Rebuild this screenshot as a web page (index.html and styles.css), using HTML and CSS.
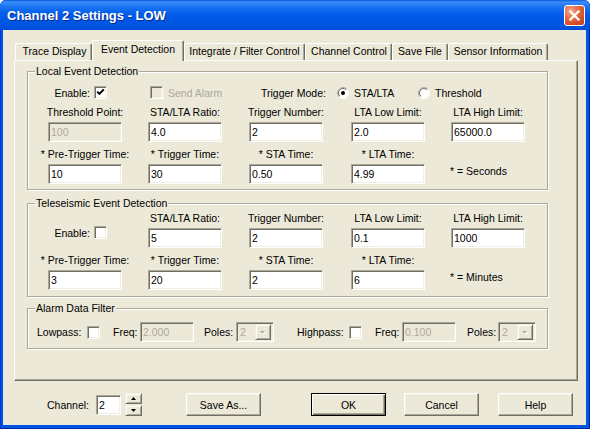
FILE: index.html
```html
<!DOCTYPE html>
<html>
<head>
<meta charset="utf-8">
<title>Channel 2 Settings - LOW</title>
<link rel="stylesheet" href="styles.css">
</head>
<body>
<div class="window">
  <div class="titlebar">
    <span class="title">Channel 2 Settings - LOW</span>
    <span class="close"><svg width="11" height="11" viewBox="0 0 11 11"><path d="M1.5 1.5 L9.5 9.5 M9.5 1.5 L1.5 9.5" stroke="#fff" stroke-width="2.3" stroke-linecap="square"/></svg></span>
  </div>
  <div class="client">
    <div class="tabs">
      <div class="tab t-trace">Trace Display</div>
      <div class="tab active t-event">Event Detection</div>
      <div class="tab t-integ">Integrate / Filter Control</div>
      <div class="tab t-chan">Channel Control</div>
      <div class="tab t-save">Save File</div>
      <div class="tab t-sensor">Sensor Information</div>
    </div>
    <div class="panel">
      <div class="group g-local">
        <span class="group-title">Local Event Detection</span>
        <div class="row1">
          <div class="enable"><span>Enable:</span><span class="check"><svg width="9" height="9" viewBox="0 0 9 9"><path d="M1.2 3.6 L3.4 5.9 L7.8 1.4" fill="none" stroke="#000" stroke-width="2"/></svg></span></div>
          <div class="sendalarm"><span class="check off"></span><span class="dis">Send Alarm</span></div>
          <span class="tm-label">Trigger Mode:</span>
          <div class="opt opt-sta"><span class="radio"><svg width="12" height="12" viewBox="0 0 12 12"><circle cx="6" cy="6" r="5.5" fill="#fff"/><path d="M2.1 9.9 A5.5 5.5 0 0 1 9.9 2.1" fill="none" stroke="#ACA899"/><path d="M2.8 9.2 A4.5 4.5 0 0 1 9.2 2.8" fill="none" stroke="#716F64"/><path d="M9.9 2.1 A5.5 5.5 0 0 1 2.1 9.9" fill="none" stroke="#fff"/><circle cx="6" cy="6" r="2" fill="#000"/></svg></span><span>STA/LTA</span></div>
          <div class="opt"><span class="radio"><svg width="12" height="12" viewBox="0 0 12 12"><circle cx="6" cy="6" r="5.5" fill="#fff"/><path d="M2.1 9.9 A5.5 5.5 0 0 1 9.9 2.1" fill="none" stroke="#ACA899"/><path d="M2.8 9.2 A4.5 4.5 0 0 1 9.2 2.8" fill="none" stroke="#716F64"/><path d="M9.9 2.1 A5.5 5.5 0 0 1 2.1 9.9" fill="none" stroke="#fff"/></svg></span><span>Threshold</span></div>
        </div>
        <div class="fields">
          <div class="field"><span class="lbl">Threshold Point:</span><input class="edit" value="100" disabled></div>
          <div class="field"><span class="lbl">STA/LTA Ratio:</span><input class="edit" value="4.0"></div>
          <div class="field"><span class="lbl">Trigger Number:</span><input class="edit" value="2"></div>
          <div class="field"><span class="lbl">LTA Low Limit:</span><input class="edit" value="2.0"></div>
          <div class="field"><span class="lbl">LTA High Limit:</span><input class="edit" value="65000.0"></div>
          <div class="field"><span class="lbl">* Pre-Trigger Time:</span><input class="edit" value="10"></div>
          <div class="field"><span class="lbl">* Trigger Time:</span><input class="edit" value="30"></div>
          <div class="field"><span class="lbl">* STA Time:</span><input class="edit" value="0.50"></div>
          <div class="field"><span class="lbl">* LTA Time:</span><input class="edit" value="4.99"></div>
          <div class="note">* = Seconds</div>
        </div>
      </div>

      <div class="group g-tele">
        <span class="group-title">Teleseismic Event Detection</span>
        <div class="fields">
          <div class="field enable-cell"><div class="enable"><span>Enable:</span><span class="check"></span></div></div>
          <div class="field"><span class="lbl">STA/LTA Ratio:</span><input class="edit" value="5"></div>
          <div class="field"><span class="lbl">Trigger Number:</span><input class="edit" value="2"></div>
          <div class="field"><span class="lbl">LTA Low Limit:</span><input class="edit" value="0.1"></div>
          <div class="field"><span class="lbl">LTA High Limit:</span><input class="edit" value="1000"></div>
          <div class="field"><span class="lbl">* Pre-Trigger Time:</span><input class="edit" value="3"></div>
          <div class="field"><span class="lbl">* Trigger Time:</span><input class="edit" value="20"></div>
          <div class="field"><span class="lbl">* STA Time:</span><input class="edit" value="2"></div>
          <div class="field"><span class="lbl">* LTA Time:</span><input class="edit" value="6"></div>
          <div class="note">* = Minutes</div>
        </div>
      </div>

      <div class="group g-alarm">
        <span class="group-title">Alarm Data Filter</span>
        <div class="row3">
          <span class="w-low">Lowpass:</span>
          <span class="check"></span>
          <span class="w-freq f1">Freq:</span>
          <input class="edit small" value="2.000" disabled>
          <span class="w-poles p1">Poles:</span>
          <div class="combo"><span class="val">2</span><span class="drop"><svg width="14" height="14" viewBox="0 0 14 14"><path d="M5 7 L10 7 L7.5 9.5 Z" fill="#fff"/><path d="M4 6 L9 6 L6.5 8.5 Z" fill="#ACA899"/></svg></span></div>
          <span class="w-high">Highpass:</span>
          <span class="check"></span>
          <span class="w-freq f2">Freq:</span>
          <input class="edit small" value="0.100" disabled>
          <span class="w-poles p2">Poles:</span>
          <div class="combo"><span class="val">2</span><span class="drop"><svg width="14" height="14" viewBox="0 0 14 14"><path d="M5 7 L10 7 L7.5 9.5 Z" fill="#fff"/><path d="M4 6 L9 6 L6.5 8.5 Z" fill="#ACA899"/></svg></span></div>
        </div>
      </div>
    </div>

    <div class="footer">
      <span class="ch-label">Channel:</span>
      <input class="edit ch" value="2">
      <div class="spin">
        <span class="spin-btn"><svg width="5" height="3" viewBox="0 0 5 3"><path d="M2.5 0 L5 3 L0 3 Z" fill="#000"/></svg></span>
        <span class="spin-btn"><svg width="5" height="3" viewBox="0 0 5 3"><path d="M0 0 L5 0 L2.5 3 Z" fill="#000"/></svg></span>
      </div>
      <button class="btn b-save">Save As...</button>
      <button class="btn default b-ok">OK</button>
      <button class="btn b-cancel">Cancel</button>
      <button class="btn b-help">Help</button>
    </div>
  </div>
</div>
</body>
</html>
```

FILE: styles.css
```css
body {
  margin: 0;
  background: #ffffff;
  font-family: "Liberation Sans", Arial, sans-serif;
  font-size: 10.5px;
  color: #000;
}

.window {
  width: 590px;
  height: 429px;
  display: flex;
  flex-direction: column;
  background: #0055E5;
  border-radius: 6px 6px 0 0;
  overflow: hidden;
  box-shadow: inset -1px -1px 0 #00269E, inset 1px 0 0 #0838D0;
}

.titlebar {
  height: 30px;
  flex: none;
  display: flex;
  align-items: center;
  padding: 0 5px 0 7px;
  background: linear-gradient(#0A5BE0 0px, #3E8EF6 2px, #2C82F6 4px, #1670EF 8px, #0560EB 13px, #0058E6 18px, #0054E1 25px, #004CD8 30px);
}

.title {
  flex: 1;
  color: #fff;
  font-weight: bold;
  font-size: 13px;
  text-shadow: 1px 1px 0 #0A2C8E;
  margin-top: 1px;
}

.close {
  width: 21px;
  height: 21px;
  box-sizing: border-box;
  border: 1px solid #fff;
  border-radius: 3px;
  background: radial-gradient(circle at 30% 25%, #F4A98E 0%, #E56A43 40%, #D24A22 75%, #C23E1A 100%);
  display: flex;
  align-items: center;
  justify-content: center;
}

.client {
  flex: 1;
  background: #ECE9D8;
  margin: 0 4px 4px 3px;
  padding-top: 10px;
  display: flex;
  flex-direction: column;
}

/* Tabs */
.tabs {
  display: flex;
  align-items: flex-end;
  height: 21px;
  margin: 0 0 -1px 12px;
  position: relative;
  z-index: 1;
}

.tab {
  box-sizing: border-box;
  height: 17px;
  margin-bottom: 1px;
  border: 1px solid;
  border-bottom: none;
  border-color: #fff #716F64 transparent #fff;
  border-radius: 2px 2px 0 0;
  box-shadow: inset -1px 0 0 #ACA899;
  text-align: center;
  line-height: 15px;
  white-space: nowrap;
  background: #ECE9D8;
}

.tab.active {
  height: 21px;
  margin-bottom: 0;
  padding-top: 1px;
}

.t-trace { width: 77px; padding-left: 2px; }
.t-event { width: 92px; }
.t-integ { width: 121px; }
.t-chan { width: 87px; padding-left: 1px; }
.t-save { width: 56px; }
.t-sensor { width: 100px; }

/* Panel */
.panel {
  height: 321px;
  box-sizing: border-box;
  margin: 0 8px 0 11px;
  border: 1px solid;
  border-color: #fff #716F64 #716F64 #fff;
  box-shadow: inset -1px -1px 0 #ACA899;
  padding: 10px 0 0 12px;
}

.group {
  position: relative;
  width: 521px;
  box-sizing: border-box;
  border: 1px solid #ACA899;
  box-shadow: inset 1px 1px 0 #fff, 1px 1px 0 #fff;
}

.group-title {
  position: absolute;
  top: -7px;
  left: 7px;
  padding: 0 1px;
  background: #ECE9D8;
  line-height: 13px;
  white-space: nowrap;
}

.g-local { padding: 14px 0 5px 0; }
.g-tele { padding: 8px 0 6px 0; margin-top: 13px; }
.g-alarm { padding: 13px 0 6px 0; margin-top: 11px; }

/* Row 1 */
.row1 {
  display: flex;
  align-items: center;
  height: 13px;
  padding-left: 20px;
  white-space: nowrap;
}

.enable {
  width: 59px;
  display: flex;
  justify-content: flex-end;
  align-items: center;
  gap: 4px;
  white-space: nowrap;
}

.sendalarm {
  margin-left: 43px;
  width: 111px;
  display: flex;
  align-items: center;
  gap: 5px;
}

.dis { color: #ACA899; }

.tm-label { width: 76px; }

.opt {
  display: flex;
  align-items: center;
  gap: 5px;
}
.opt-sta { width: 81px; }

.radio {
  width: 12px;
  height: 12px;
  display: block;
}
.radio svg { display: block; }

.check {
  width: 13px;
  height: 13px;
  flex: none;
  box-sizing: border-box;
  border: 1px solid;
  border-color: #ACA899 #fff #fff #ACA899;
  box-shadow: inset 1px 1px 0 #716F64, inset -1px -1px 0 #F1EFE2;
  background: #fff;
  display: flex;
  align-items: center;
  justify-content: center;
}
.check.off { background: #ECE9D8; }

/* Fields grid */
.fields {
  display: grid;
  grid-template-columns: 100px 101px 102px 100px 74px;
  row-gap: 6px;
  padding-left: 20px;
}
.g-local .fields { margin-top: 7px; }

.field {
  width: 74px;
  display: flex;
  flex-direction: column;
  align-items: center;
  gap: 3px;
}

.lbl {
  line-height: 13px;
  white-space: nowrap;
}

.enable-cell {
  align-items: flex-start;
  padding-top: 14px;
}

.note {
  align-self: end;
  margin-bottom: 6px;
  line-height: 13px;
  white-space: nowrap;
  margin-left: -1px;
}

.edit {
  display: block;
  width: 74px;
  height: 20px;
  box-sizing: border-box;
  margin: 0;
  border: 1px solid;
  border-color: #ACA899 #fff #fff #ACA899;
  box-shadow: inset 1px 1px 0 #716F64, inset -1px -1px 0 #F1EFE2;
  background: #fff;
  padding: 0 1px 0 2px;
  font: inherit;
  color: #000;
  outline: none;
}
.edit:disabled {
  background: #ECE9D8;
  color: #ACA899;
}
.edit.small { width: 54px; }
.edit.ch { width: 25px; }

/* Alarm filter row */
.row3 {
  display: flex;
  align-items: center;
  height: 20px;
  padding-left: 9px;
  white-space: nowrap;
}

.w-low { width: 50px; }
.w-high { width: 52px; margin-left: 23px; }
.w-freq { width: 27px; margin-left: 13px; }
.w-poles { width: 32px; }
.p1 { margin-left: 10px; }
.p2 { margin-left: 11px; width: 31px; }

.combo {
  width: 38px;
  height: 20px;
  box-sizing: border-box;
  border: 1px solid;
  border-color: #ACA899 #fff #fff #ACA899;
  box-shadow: inset 1px 1px 0 #716F64, inset -1px -1px 0 #F1EFE2;
  background: #ECE9D8;
  padding: 2px;
  display: flex;
  align-items: center;
}
.combo .val {
  flex: 1;
  color: #ACA899;
  padding-left: 1px;
}
.drop {
  width: 16px;
  height: 16px;
  box-sizing: border-box;
  border: 1px solid;
  border-color: #F1EFE2 #716F64 #716F64 #F1EFE2;
  box-shadow: inset 1px 1px 0 #fff, inset -1px -1px 0 #ACA899;
  display: flex;
  align-items: center;
  justify-content: center;
}

/* Footer */
.footer {
  display: flex;
  align-items: center;
  height: 23px;
  margin-top: 12px;
  padding-left: 44px;
}

.ch-label { width: 49px; white-space: nowrap; }

.spin {
  margin-left: 4px;
  width: 17px;
  height: 23px;
  display: flex;
  flex-direction: column;
  gap: 1px;
}
.spin-btn {
  flex: 1;
  box-sizing: border-box;
  border: 1px solid;
  border-color: #F1EFE2 #716F64 #716F64 #F1EFE2;
  box-shadow: inset 1px 1px 0 #fff, inset -1px -1px 0 #ACA899;
  display: flex;
  align-items: center;
  justify-content: center;
}

.btn {
  width: 75px;
  height: 23px;
  box-sizing: border-box;
  margin: 0;
  padding: 0;
  border: 1px solid;
  border-color: #fff #716F64 #716F64 #fff;
  box-shadow: inset -1px -1px 0 #ACA899, inset 1px 1px 0 #F1EFE2;
  background: #ECE9D8;
  font: inherit;
  color: #000;
}
.btn.default {
  border-color: #000;
  box-shadow: inset 1px 1px 0 #fff, inset -1px -1px 0 #716F64, inset -2px -2px 0 #ACA899;
}

.b-save { margin-left: 44px; }
.b-ok { margin-left: 50px; }
.b-cancel { margin-left: 18px; }
.b-help { margin-left: 19px; }
```
